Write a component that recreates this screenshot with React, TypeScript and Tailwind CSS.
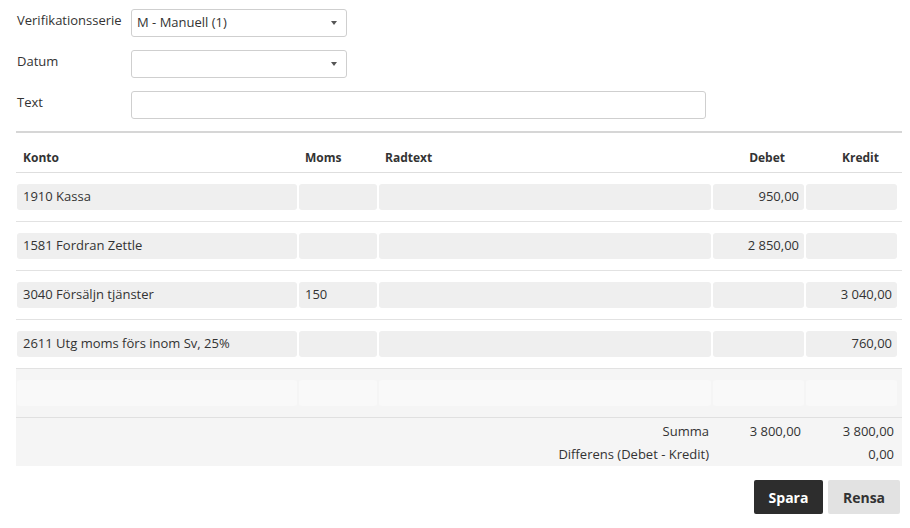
const rows = [
  { konto: '1910 Kassa', moms: '', radtext: '', debet: '950,00', kredit: '' },
  { konto: '1581 Fordran Zettle', moms: '', radtext: '', debet: '2 850,00', kredit: '' },
  { konto: '3040 Försäljn tjänster', moms: '150', radtext: '', debet: '', kredit: '3 040,00' },
  { konto: '2611 Utg moms förs inom Sv, 25%', moms: '', radtext: '', debet: '', kredit: '760,00' },
];

const cols = 'grid grid-cols-[280px_78px_332px_91px_91px] gap-x-[2px] pl-px';

function Caret() {
  return <span className="h-0 w-0 border-x-[3.5px] border-t-[4px] border-x-transparent border-t-[#555]" />;
}

function Select({ value }: { value: string }) {
  return (
    <div className="flex h-[28px] w-[216px] items-center justify-between rounded-[3px] border border-[#cfcfcf] pl-[5px] pr-[9px]">
      <span>{value}</span>
      <Caret />
    </div>
  );
}

function FormRow({ label, children }: { label: string; children: React.ReactNode }) {
  return (
    <div className="flex items-start">
      <div className="w-[115px] pl-px pt-px leading-[20px]">{label}</div>
      {children}
    </div>
  );
}

export default function App() {
  return (
    <div className="h-[528px] w-[910px] bg-white pl-4 pr-2 pt-[9px] font-['Open_Sans',sans-serif] text-[13px] text-[#333]">
      <div className="flex flex-col gap-[13px]">
        <FormRow label="Verifikationsserie">
          <Select value="M - Manuell (1)" />
        </FormRow>
        <FormRow label="Datum">
          <Select value="" />
        </FormRow>
        <FormRow label="Text">
          <div className="h-[28px] w-[575px] rounded-[3px] border border-[#cfcfcf]" />
        </FormRow>
      </div>

      <div className="mt-[12px] h-[2px] bg-[#d6d6d6]" />

      <div className={`${cols} border-b border-[#dedede] pb-[6px] pt-[17px] text-[12px] font-bold leading-[16px]`}>
        <div className="pl-[6px]">Konto</div>
        <div className="pl-[6px]">Moms</div>
        <div className="pl-[6px]">Radtext</div>
        <div className="pr-[19px] text-right">Debet</div>
        <div className="pr-[18px] text-right">Kredit</div>
      </div>

      {rows.map((r) => (
        <div key={r.konto} className={`${cols} border-b border-[#e2e2e2] py-[11px]`}>
          <div className="flex h-[26px] items-center rounded-[3px] bg-[#efefef] px-[6px]">{r.konto}</div>
          <div className="flex h-[26px] items-center rounded-[3px] bg-[#efefef] px-[6px]">{r.moms}</div>
          <div className="flex h-[26px] items-center rounded-[3px] bg-[#efefef] px-[6px]">{r.radtext}</div>
          <div className="flex h-[26px] items-center justify-end rounded-[3px] bg-[#efefef] px-[5px]">{r.debet}</div>
          <div className="flex h-[26px] items-center justify-end rounded-[3px] bg-[#efefef] px-[5px]">{r.kredit}</div>
        </div>
      ))}

      <div className={`${cols} border-b border-[#e0e0e0] bg-[#f5f5f5] py-[11px]`}>
        <div className="h-[26px] rounded-[3px] bg-[#f9f9f9]" />
        <div className="h-[26px] rounded-[3px] bg-[#f9f9f9]" />
        <div className="h-[26px] rounded-[3px] bg-[#f9f9f9]" />
        <div className="h-[26px] rounded-[3px] bg-[#f9f9f9]" />
        <div className="h-[26px] rounded-[3px] bg-[#f9f9f9]" />
      </div>

      <div className={`${cols} bg-[#f5f5f5] pt-[2px] leading-[23px]`}>
        <div className="col-span-3 pr-[2px] text-right">Summa</div>
        <div className="pr-[3px] text-right">3 800,00</div>
        <div className="pr-[3px] text-right">3 800,00</div>
        <div className="col-span-3 pr-[2px] text-right">Differens (Debet - Kredit)</div>
        <div />
        <div className="pr-[3px] text-right">0,00</div>
      </div>

      <div className="mt-[14px] flex justify-end gap-[5px] pr-[2px]">
        <button className="h-[34px] w-[69px] rounded-[2px] bg-[#2d2d2d] text-[14px] font-bold text-white">Spara</button>
        <button className="h-[34px] w-[72px] rounded-[2px] bg-[#e2e2e2] text-[14px] font-bold text-[#333]">Rensa</button>
      </div>
    </div>
  );
}
